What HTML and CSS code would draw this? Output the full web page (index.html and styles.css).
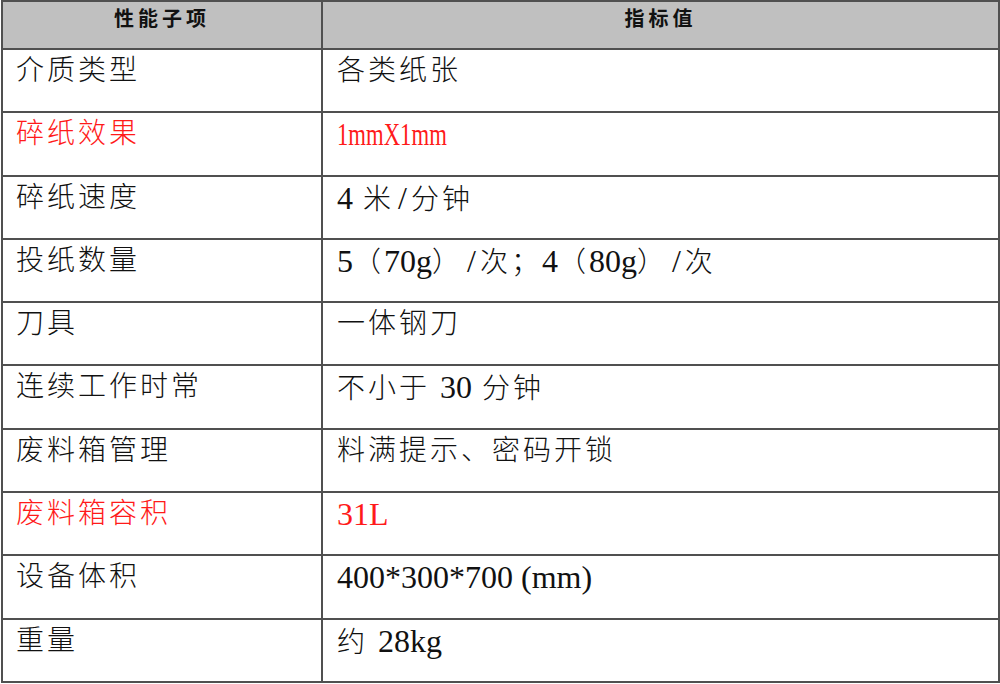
FILE: index.html
```html
<!DOCTYPE html>
<html lang="zh-CN">
<head>
<meta charset="utf-8">
<title>性能指标</title>
<link rel="stylesheet" href="styles.css">
</head>
<body>
<div class="spec">
  <div class="cell head">性能子项</div>
  <div class="cell head">指标值</div>

  <div class="cell">介质类型</div>
  <div class="cell">各类纸张</div>

  <div class="cell red">碎纸效果</div>
  <div class="cell red"><span class="lat narrow">1mmX1mm</span></div>

  <div class="cell">碎纸速度</div>
  <div class="cell"><span class="lat">4</span> 米<span class="lat sl">/</span>分钟</div>

  <div class="cell">投纸数量</div>
  <div class="cell"><span class="lat">5</span>（<span class="lat">70g</span>）<span class="lat sl">/</span>次；<span class="lat">4</span>（<span class="lat">80g</span>）<span class="lat sl">/</span>次</div>

  <div class="cell">刀具</div>
  <div class="cell">一体钢刀</div>

  <div class="cell">连续工作时常</div>
  <div class="cell">不小于 <span class="lat">30</span> 分钟</div>

  <div class="cell">废料箱管理</div>
  <div class="cell">料满提示、密码开锁</div>

  <div class="cell red">废料箱容积</div>
  <div class="cell red"><span class="lat">31L</span></div>

  <div class="cell">设备体积</div>
  <div class="cell"><span class="lat">400*300*700 (mm)</span></div>

  <div class="cell">重量</div>
  <div class="cell">约 <span class="lat">28kg</span></div>
</div>
</body>
</html>
```

FILE: styles.css
```css
html, body {
  margin: 0;
  padding: 0;
  background: #ffffff;
}

body {
  font-family: "Liberation Serif", "Noto Sans CJK SC", serif;
  color: #111111;
}

.spec {
  margin-left: 1px;
  width: 999px;
  height: 683px;
  box-sizing: border-box;
  padding: 2px;
  background: #505050;
  display: grid;
  grid-template-columns: 318px 1fr;
  grid-template-rows: 46px repeat(10, 1fr);
  gap: 2px;
}

.cell {
  background: #ffffff;
  font-size: 28px;
  font-weight: 300;
  letter-spacing: 3px;
  line-height: 34px;
  padding: 4px 0 0 13px;
  white-space: nowrap;
}

.cell:nth-child(even) {
  padding-left: 14px;
}

.head {
  background: #c0c0c0;
  font-family: "Noto Sans CJK SC", sans-serif;
  font-size: 20px;
  font-weight: 700;
  letter-spacing: 4px;
  line-height: 26px;
  padding: 3px 0 0 0;
  text-align: center;
}

.cell.head:nth-child(even) {
  padding-left: 0;
}

.red {
  color: #ff1a1a;
}

.lat {
  font-family: "Liberation Serif", serif;
  font-size: 32px;
  font-weight: 400;
  letter-spacing: 0;
}

.lat.sl {
  letter-spacing: 4px;
  padding-left: 4px;
}

.narrow {
  display: inline-block;
  transform: scaleX(0.71);
  transform-origin: left center;
}
```
